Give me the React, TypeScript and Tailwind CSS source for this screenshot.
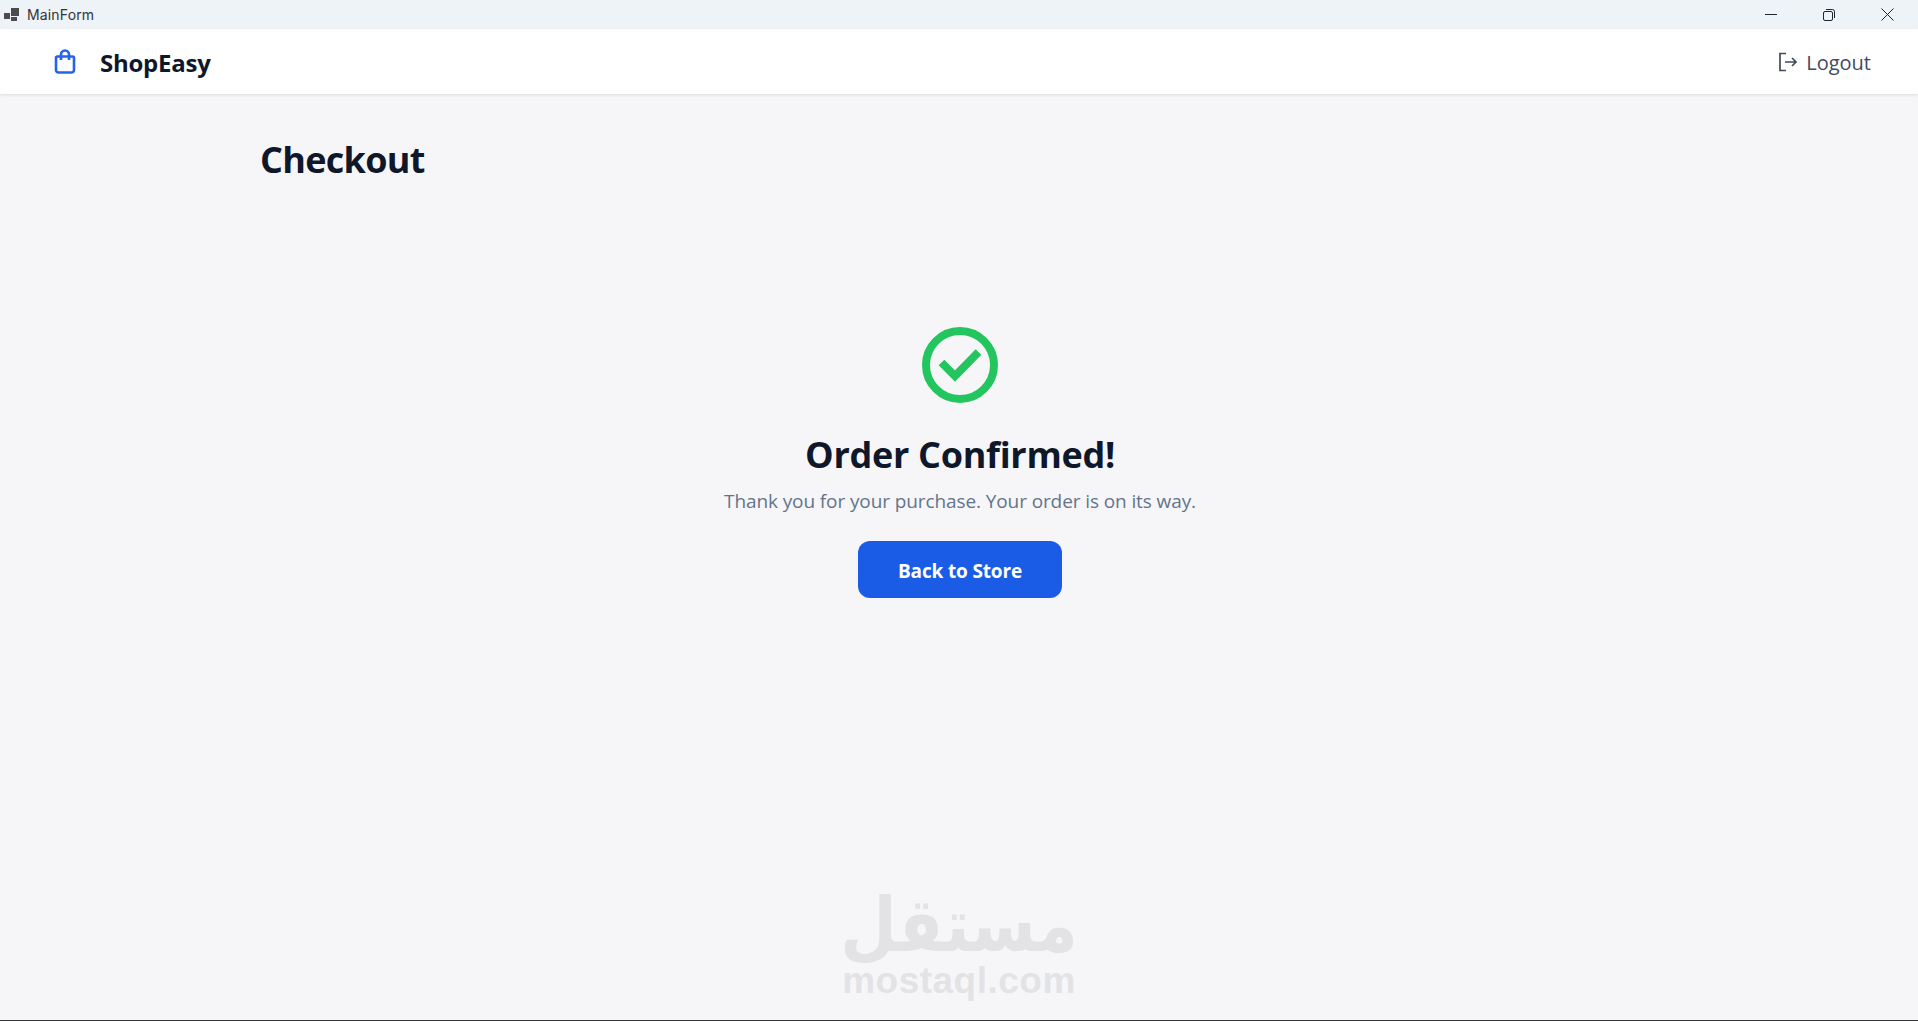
export default function App() {
  return (
    <div className="relative h-[1021px] flex flex-col overflow-hidden bg-[#f6f6f9] font-['Open_Sans','Noto_Sans',sans-serif] border-b border-[#3a3a3a]">
      {/* window title bar */}
      <div className="h-[29px] shrink-0 flex items-center bg-[#edf3f7] pl-[4px]">
        <svg width="16" height="16" viewBox="0 0 16 16" className="text-[#4a4a4f]">
          <rect x="0" y="6" width="6" height="6" fill="currentColor" />
          <rect x="7" y="1" width="8" height="8" fill="currentColor" />
          <rect x="7" y="10" width="6" height="4" fill="currentColor" />
        </svg>
        <span className="ml-[7px] text-[14px] tracking-[0.15px] text-[#33343a] font-['Inter',sans-serif]">MainForm</span>
        <div className="ml-auto flex items-center pr-[2px]">
          <button className="w-[58px] h-[29px] flex items-center justify-center">
            <svg width="12" height="12" viewBox="0 0 12 12"><path d="M0 5.5H12" stroke="#1f2430" strokeWidth="1" /></svg>
          </button>
          <button className="w-[58px] h-[29px] flex items-center justify-center">
            <svg width="12" height="12" viewBox="0 0 12 12" fill="none" stroke="#1f2430">
              <rect x="0.5" y="2.5" width="9" height="9" rx="1.5" />
              <path d="M3 0.5H9.5A2 2 0 0 1 11.5 2.5V9" />
            </svg>
          </button>
          <button className="w-[58px] h-[29px] flex items-center justify-center">
            <svg width="13" height="13" viewBox="0 0 13 13"><path d="M0.5 0.5L12.5 12.5M12.5 0.5L0.5 12.5" stroke="#1f2430" strokeWidth="1" /></svg>
          </button>
        </div>
      </div>

      {/* app header */}
      <header className="h-[65px] shrink-0 flex items-center justify-between bg-white pl-[54px] pr-[47px] shadow-[0_1px_3px_rgba(15,23,42,0.12)]">
        <div className="flex items-center">
          <svg width="22" height="25" viewBox="0 0 22 25" fill="none" stroke="#2563eb" strokeWidth="2.6">
            <path d="M3.5 7.5H18.5A1.5 1.5 0 0 1 20 9V21A2.5 2.5 0 0 1 17.5 23.5H4.500A2.500 2.500 0 0 1 2 21V9A1.500 1.500 0 0 1 3.500 7.500Z" strokeLinejoin="round" />
            <path d="M7 11V5.500A4 4 0 0 1 15 5.500V11" />
          </svg>
          <span className="ml-[24px] pt-[2px] text-[24px] font-bold text-[#0f172a] tracking-[-0.25px]">ShopEasy</span>
        </div>
        <button className="flex items-center text-[#3f4a5c]">
          <svg width="20" height="20" viewBox="0 0 20 20" fill="none" stroke="#3f4a5c" strokeWidth="1.7">
            <path d="M8 1.500H2V18.500H8" />
            <path d="M7 10H18M14 6L18 10L14 14" />
          </svg>
          <span className="ml-[8px] pt-[2px] text-[20px]">Logout</span>
        </button>
      </header>

      {/* page body */}
      <main className="flex-1 w-[1400px] ml-[260px] pt-[41px]">
        <h1 className="text-[36px] leading-[50px] font-bold text-[#0f172a] tracking-[-0.7px]">Checkout</h1>
        <div className="mt-[142px] flex flex-col items-center">
          <svg width="76" height="76" viewBox="0 0 76 76" fill="none" stroke="#22c55e">
            <circle cx="38" cy="38" r="34" strokeWidth="8" />
            <path d="M19.500 35.500L33 49L56.500 25" strokeWidth="8" />
          </svg>
          <h2 className="mt-[27px] text-[36px] leading-[50px] font-bold text-[#0f172a] tracking-[-0.3px]">Order Confirmed!</h2>
          <p className="mt-[6px] text-[19px] leading-[30px] text-[#64748b] tracking-[-0.1px]">Thank you for your purchase. Your order is on its way.</p>
          <button className="mt-[25px] w-[204px] h-[57px] pt-[3px] rounded-[12px] bg-[#1b5ce6] text-white text-[19px] font-bold tracking-[-0.15px]">Back to Store</button>
        </div>
      </main>

      {/* site watermark */}
      <div className="absolute left-0 right-0 top-[891px] flex flex-col items-center select-none text-[#e3e3e5]">
        <span dir="rtl" className="my-[5px] font-['DejaVu_Sans',sans-serif] font-bold text-[65px] leading-[60px] scale-y-[1.15]">مستقل</span>
        <span className="font-['Liberation_Sans',sans-serif] font-bold text-[37px] leading-[40px] tracking-[0.5px]">mostaql.com</span>
      </div>
    </div>
  );
}
